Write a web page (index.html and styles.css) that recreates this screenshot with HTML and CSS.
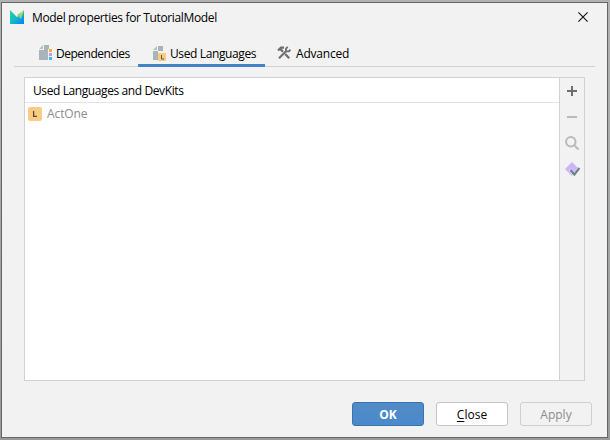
FILE: index.html
```
<!DOCTYPE html>
<html lang="en">
<head>
<meta charset="utf-8">
<title>Model properties for TutorialModel</title>
<link rel="stylesheet" href="styles.css">
</head>
<body>
<main class="dialog">
  <header class="titlebar">
    <svg class="logo" width="15" height="15" viewBox="0 0 15 15">
      <defs>
        <linearGradient id="body" x1="0" y1="0" x2="1" y2="1"><stop offset="0" stop-color="#21d789"/><stop offset=".5" stop-color="#16b9c8"/><stop offset="1" stop-color="#087cfa"/></linearGradient>
        <linearGradient id="wing" x1="1" y1="0" x2="0" y2="1"><stop offset="0" stop-color="#f0e050"/><stop offset="1" stop-color="#45cfa0"/></linearGradient>
      </defs>
      <path d="M0 0l7 7 7-7v14H0z" fill="url(#body)"/>
      <path d="M14 0L7 5l4 4z" fill="url(#wing)"/>
    </svg>
    <h1 class="title">Model properties for TutorialModel</h1>
    <svg class="close" width="10" height="10" viewBox="0 0 10 10"><path d="M.4.4l9.2 9.2M9.6.4L.4 9.6" stroke="#111" stroke-width="1.1"/></svg>
  </header>
  <nav class="tabs">
    <div class="tab tab-deps">
      <svg width="14" height="16" viewBox="0 0 14 16"><path d="M5 0h5v4H9v11H0V5h5z" fill="#a9b4ba"/><path d="M0 4l4-4v4z" fill="#b6c0c5"/><path d="M10 4h3v3h-3z" fill="#f4af3d"/><path d="M10 8h3v3h-3z" fill="#b99bf8"/><path d="M10 12h3v3h-3z" fill="#40b6e0"/></svg>
      <span>Dependencies</span>
    </div>
    <div class="tab tab-used active">
      <svg width="14" height="16" viewBox="0 0 14 16"><path d="M5 1h5v5H5v9H0V6h5z" fill="#a9b4ba"/><path d="M0 5l4-4v4z" fill="#b6c0c5"/><rect x="5" y="8" width="8" height="8" rx="1" fill="#f7cb82"/><path d="M8.5 10v4H11" fill="none" stroke="#66533a"/></svg>
      <span>Used Languages</span>
    </div>
    <div class="tab tab-adv">
      <svg width="14" height="14" viewBox="0 0 14 14" fill="none" stroke="#6e6e6e"><path d="M1 4.5L4 1.6l3 .1M3 2.7l3 3M8.2 8l4 4.2" stroke-width="2.3"/><path d="M2 12.3l7-7" stroke-width="2.2"/><path d="M10.7.8L9 2.5v2.2l.7.7h2.2l1.5-1.7" stroke-width="1.8"/></svg>
      <span>Advanced</span>
    </div>
  </nav>
  <section class="panel">
    <div class="list">
      <div class="list-head">Used Languages and DevKits</div>
      <div class="row"><svg width="14" height="14" viewBox="0 0 14 14"><rect width="14" height="14" rx="2" fill="#f9cc86"/><path d="M5.6 4v5.3H9" fill="none" stroke="#594730" stroke-width="1.3"/></svg><span>ActOne</span></div>
    </div>
    <div class="tools">
      <svg width="16" height="16" viewBox="0 0 16 16"><path d="M8 3v10M3 8h10" stroke="#6e6e6e" stroke-width="2"/></svg>
      <svg width="16" height="16" viewBox="0 0 16 16"><path d="M3 8h10" stroke="#bababa" stroke-width="2"/></svg>
      <svg width="16" height="16" viewBox="0 0 16 16" fill="none" stroke="#bababa" stroke-width="2"><circle cx="6.8" cy="6.8" r="4.7"/><path d="M10 10l4.5 4.5"/></svg>
      <svg width="16" height="16" viewBox="0 0 16 16"><path d="M8 1l7 7-7 7-7-7z" fill="#cbb5f8"/><path d="M6.2 8.5l4.2 5.3 4.8-6.5" fill="none" stroke="#f2f2f2" stroke-opacity=".6" stroke-width="3.5"/><path d="M6.6 9l3.8 4.6L15.4 7" fill="none" stroke="#6e808b" stroke-width="2.2"/></svg>
    </div>
  </section>
  <footer class="actions">
    <button class="btn primary">OK</button>
    <button class="btn"><u>C</u>lose</button>
    <button class="btn disabled">Apply</button>
  </footer>
</main>
</body>
</html>
```
FILE: styles.css
```
* { box-sizing: border-box; }
body {
  margin: 0;
  width: 610px;
  height: 440px;
  padding: 2px 2px 2px 1px;
  overflow: hidden;
  background: linear-gradient(#b2b2b2, #999c9b);
  font: 12px/16px "Open Sans", "Noto Sans", sans-serif;
  color: #000;
}
svg { display: block; flex: none; }
.dialog {
  width: 607px;
  height: 436px;
  border: 1px solid #666;
  background: #f2f2f2;
  display: flex;
  flex-direction: column;
}
.titlebar {
  height: 37px;
  display: flex;
  align-items: flex-start;
  padding: 7px 19px 0 8px;
}
.title { margin: 0 auto 0 7px; font-size: 12px; font-weight: 400; letter-spacing: -0.36px; white-space: nowrap; }
.close { margin-top: 2px; }
.tabs {
  height: 27px;
  margin: 0 12px;
  border-bottom: 1px solid #d1d1d1;
  display: flex;
  white-space: nowrap;
}
.tab { height: 27px; display: flex; align-items: flex-start; gap: 3px; padding-top: 5px; letter-spacing: -0.48px; }
.tab span { margin-top: 1px; }
.tab-deps { width: 124px; padding-left: 25px; }
.tab-used { width: 127px; padding-left: 15px; letter-spacing: -0.38px; }
.tab-adv { padding-left: 12px; gap: 5px; letter-spacing: -0.2px; }
.tab-adv svg { margin-top: 1px; }
.active { border-bottom: 3px solid #4083c9; }
.panel {
  height: 304px;
  margin: 10px 22px 0;
  border: 1px solid #d1d1d1;
  display: flex;
}
.list { flex: 1; background: #fff; }
.list-head { height: 25px; border-bottom: 1px solid #e3e3e3; padding: 5px 8px 0; letter-spacing: -0.4px; }
.row { display: flex; gap: 5px; padding: 3px; color: #8c8c8c; letter-spacing: -0.1px; }
.row svg { margin-top: 1px; }
.tools { width: 25px; border-left: 1px solid #d1d1d1; display: flex; flex-direction: column; align-items: center; gap: 10px; padding-top: 5px; }
.actions { display: flex; justify-content: flex-end; gap: 12px; margin: 21px 15px 0 0; }
.btn {
  width: 72px;
  height: 24px;
  padding: 2px 0 0;
  border: 1px solid #c4c4c4;
  border-radius: 3px;
  background: #fff;
  color: #000;
  font: inherit;
}
.btn u { text-underline-offset: 2px; }
.primary { border-color: #3b73af; background: linear-gradient(#528cc7, #4989cc); color: #fff; font-weight: 700; }
.disabled { border-color: #cfcfcf; background: #f2f2f2; color: #8c8c8c; }
```
